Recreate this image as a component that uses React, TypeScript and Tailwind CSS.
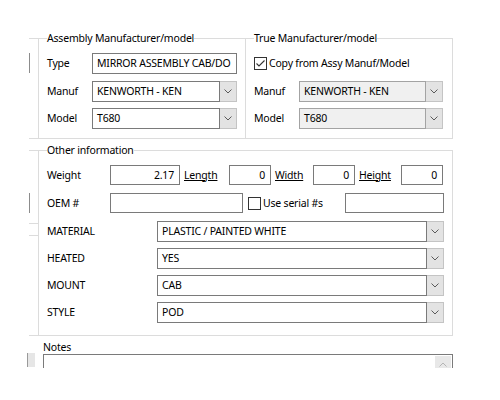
import React from 'react';

// Windows-forms style part editor: assembly / true manufacturer groups,
// other information block and the notes box.

const Chevron = ({ color = '#5a5a5a', up = false }: { color?: string; up?: boolean }) => (
  <svg width="8" height="5" viewBox="0 0 8 5" className="block">
    <polyline
      points={up ? '0.5,4.5 4,1 7.5,4.5' : '0.5,0.5 4,4 7.5,0.5'}
      fill="none"
      stroke={color}
      strokeWidth="1"
    />
  </svg>
);

const TextBox = ({ value = '', className = '', right = false }: { value?: string; className?: string; right?: boolean }) => (
  <div
    className={`h-[20px] border border-[#7a7a7a] bg-white flex items-center overflow-hidden whitespace-nowrap ${
      right ? 'justify-end pr-[5px]' : 'pl-[4px]'
    } ${className}`}
  >
    {value}
  </div>
);

const Combo = ({ value, disabled = false, className = '' }: { value: string; disabled?: boolean; className?: string }) => (
  <div className={`h-[21px] flex ${className}`}>
    <div
      className={`flex-1 min-w-0 border flex items-center pl-[4px] overflow-hidden whitespace-nowrap ${
        disabled ? 'bg-[#f0f0f0] border-[#a3a3a3]' : 'bg-white border-[#7a7a7a]'
      }`}
    >
      {value}
    </div>
    <div className="w-[17px] bg-[#e3e3e3] border border-l-0 border-[#c4c4c4] flex items-center justify-center">
      <Chevron />
    </div>
  </div>
);

const CheckBox = ({ checked = false }: { checked?: boolean }) => (
  <div className="w-[13px] h-[13px] border border-[#333333] bg-white flex items-center justify-center shrink-0">
    {checked && (
      <svg width="11" height="11" viewBox="0 0 11 11" className="block">
        <polyline points="1.5,5.5 4,8 9.5,2.5" fill="none" stroke="#333333" strokeWidth="1.1" />
      </svg>
    )}
  </div>
);

const HLine = () => <div className="h-px ml-[2px] bg-[#dcdcdc]" />;
const VLine = () => <div className="h-[20px] w-px ml-[2px] bg-[#8c8c8c]" />;

// edges of the panel that sits behind the groups
const LeftEdge = () => (
  <div className="w-[11px] shrink-0 flex flex-col">
    <div className="h-[7px]" />
    <HLine />
    <div className="h-[14px]" />
    <VLine />
    <div className="h-[65px]" />
    <HLine />
    <div className="h-[11px]" />
    <HLine />
    <div className="h-[42px]" />
    <VLine />
    <div className="h-[10px]" />
    <HLine />
    <div className="h-[11px]" />
    <HLine />
    <div className="h-[99px]" />
    <HLine />
    <div className="h-[17px]" />
    <div className="h-[14px] w-[8px] bg-[#e6e6e6] border-l border-[#9a9a9a]" />
  </div>
);

const Field = ({ label, children, labelWidth }: { label: string; children: React.ReactNode; labelWidth: string }) => (
  <div className="flex items-center">
    <div className={`${labelWidth} shrink-0`}>{label}</div>
    {children}
  </div>
);

export default function App() {
  return (
    <div
      className="w-[500px] h-[400px] bg-white overflow-hidden text-[10.5px] tracking-[-0.2px] leading-[15px] text-black"
      style={{ fontFamily: '"Noto Sans", "Open Sans", sans-serif' }}
    >
      <div className="h-[368px] overflow-hidden flex pt-[31px] pl-[27px]">
        <LeftEdge />

        <div className="w-[415px] flex flex-col">
          <div className="flex">
            <fieldset className="w-[208px] border border-[#dcdcdc] pl-[8px] pr-[8px] pt-[7px] pb-[9px]">
              <legend className="leading-[15px]">Assembly Manufacturer/model</legend>
              <div className="flex flex-col gap-[6px]">
                <Field label="Type" labelWidth="w-[45px]">
                  <TextBox value="MIRROR ASSEMBLY CAB/DO" className="w-[145px] h-[21px]" />
                </Field>
                <Field label="Manuf" labelWidth="w-[45px]">
                  <Combo value="KENWORTH - KEN" className="w-[145px] mt-px" />
                </Field>
                <Field label="Model" labelWidth="w-[45px]">
                  <Combo value="T680" className="w-[145px]" />
                </Field>
              </div>
            </fieldset>

            <fieldset className="w-[207px] border border-l-0 border-[#dcdcdc] pl-[8px] pr-[9px] pt-[7px] pb-[9px]">
              <legend className="leading-[15px]">True Manufacturer/model</legend>
              <div className="flex flex-col gap-[6px]">
                <div className="h-[21px] flex items-center gap-[2px]">
                  <CheckBox checked />
                  <span>Copy from Assy Manuf/Model</span>
                </div>
                <Field label="Manuf" labelWidth="w-[45px]">
                  <Combo value="KENWORTH - KEN" disabled className="w-[144px] mt-px" />
                </Field>
                <Field label="Model" labelWidth="w-[45px]">
                  <Combo value="T680" disabled className="w-[144px]" />
                </Field>
              </div>
            </fieldset>
          </div>

          <fieldset className="mt-[4px] border border-[#dcdcdc] pl-[8px] pr-[8px] pt-[7px] pb-[12px]">
            <legend className="leading-[15px]">Other information</legend>
            <div className="flex flex-col">
              <div className="flex items-center">
                <div className="w-[63px] shrink-0">Weight</div>
                <TextBox value="2.17" right className="w-[70px]" />
                <span className="w-[49px] pl-[4px] underline">Length</span>
                <TextBox value="0" right className="w-[42px]" />
                <span className="w-[42px] pl-[4px] underline">Width</span>
                <TextBox value="0" right className="w-[42px]" />
                <span className="w-[46px] pl-[4px] underline">Height</span>
                <TextBox value="0" right className="w-[42px]" />
              </div>

              <div className="flex items-center mt-[8px]">
                <div className="w-[63px] shrink-0">OEM #</div>
                <TextBox className="w-[133px]" />
                <div className="ml-[5px] flex items-center gap-[2px]">
                  <CheckBox />
                  <span>Use serial #s</span>
                </div>
                <TextBox className="w-[99px] ml-auto" />
              </div>

              <div className="flex flex-col gap-[6px] mt-[8px]">
                {[
                  ['MATERIAL', 'PLASTIC / PAINTED WHITE'],
                  ['HEATED', 'YES'],
                  ['MOUNT', 'CAB'],
                  ['STYLE', 'POD'],
                ].map(([label, value]) => (
                  <div key={label} className="flex items-center">
                    <div className="w-[110px] shrink-0">{label}</div>
                    <Combo value={value} className="flex-1" />
                  </div>
                ))}
              </div>
            </div>
          </fieldset>

          <div className="mt-[4px] ml-[5px] leading-[14px]">Notes</div>
          <div className="ml-[5px] w-[410px] h-[40px] shrink-0 border border-[#7a7a7a] bg-white flex justify-end pr-px pt-px">
            <div className="w-[16px] h-[16px] bg-[#e8e8e8] flex items-center justify-center">
              <Chevron color="#b5b5b5" up />
            </div>
          </div>
        </div>
      </div>
    </div>
  );
}
